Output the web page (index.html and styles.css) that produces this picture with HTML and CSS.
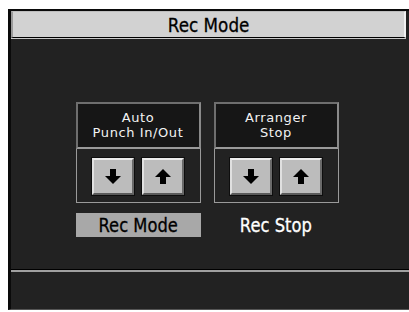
FILE: index.html
```html
<!DOCTYPE html>
<html>
<head>
<meta charset="utf-8">
<link rel="stylesheet" href="styles.css">
</head>
<body>
<div class="screen">
  <div class="title"><span class="t">Rec Mode</span></div>
  <div class="main">
    <div class="col">
      <div class="panel">
        <div class="caption"><span class="c">Auto</span><span class="c">Punch In/Out</span></div>
        <div class="btns">
          <div class="btn"><svg class="arr" viewBox="0 0 16 15"><path d="M5 0h6v7h5l-8 8-8-8h5z" fill="#000"/></svg></div>
          <div class="btn"><svg class="arr" viewBox="0 0 16 15"><path d="M5 15h6v-7h5l-8-8-8 8h5z" fill="#000"/></svg></div>
        </div>
      </div>
      <div class="label sel"><span class="l">Rec Mode</span></div>
    </div>
    <div class="col">
      <div class="panel">
        <div class="caption"><span class="c">Arranger</span><span class="c">Stop</span></div>
        <div class="btns">
          <div class="btn"><svg class="arr" viewBox="0 0 16 15"><path d="M5 0h6v7h5l-8 8-8-8h5z" fill="#000"/></svg></div>
          <div class="btn"><svg class="arr" viewBox="0 0 16 15"><path d="M5 15h6v-7h5l-8-8-8 8h5z" fill="#000"/></svg></div>
        </div>
      </div>
      <div class="label"><span class="l">Rec Stop</span></div>
    </div>
  </div>
  <div class="foot"></div>
</div>
</body>
</html>
```
FILE: styles.css
```css
html, body { margin: 0; padding: 0; background: #fff; }
body { font-family: "DejaVu Sans", "Noto Sans", sans-serif; }
.screen {
  margin: 9px 0 0 8px;
  width: 401px;
  height: 301px;
  box-sizing: border-box;
  background: #222;
  border-left: 3px solid #0a0a0a;
  border-top: 2px solid #0a0a0a;
  border-bottom: 1px solid #555;
  display: flex;
  flex-direction: column;
}
.title {
  height: 27px;
  box-sizing: border-box;
  background: #d2d2d2;
  border-left: 2px solid #9a9a9a;
  border-top: 1px solid #bdbdbd;
  border-right: 2px solid #f0f0f0;
  margin-right: 3px;
  text-align: center;
  font-size: 20px;
  line-height: 26px;
  color: #000;
  border-bottom: 1px solid #000;
  box-shadow: 0 1px 0 #c8c8c8;
}
.t { display: inline-block; transform: scaleX(0.84); -webkit-text-stroke: 0.3px #000; }
.main {
  flex: 1;
  display: flex;
  justify-content: center;
  gap: 13px;
  padding-top: 64px;
  padding-right: 6px;
  border-bottom: 1px solid #000;
}
.col { display: flex; flex-direction: column; width: 125px; }
.panel { display: flex; flex-direction: column; }
.caption {
  height: 47px;
  box-sizing: border-box;
  background: #161616;
  border: 2px solid #6e6e6e;
  border-right-color: #8a8a8a;
  border-bottom-color: #9a9a9a;
  color: #f2f2f2;
  font-size: 13px;
  line-height: 15px;
  text-align: center;
  padding-top: 6px;
  display: flex;
  flex-direction: column;
  align-items: center;
}
.c { display: block; letter-spacing: 0.6px; }
.btns {
  height: 54px;
  box-sizing: border-box;
  border: 1px solid #9a9a9a;
  border-top: none;
  display: flex;
  justify-content: center;
  align-items: center;
  gap: 8px;
  padding-top: 1px;
}
.btn {
  width: 42px;
  height: 37px;
  box-sizing: border-box;
  background: #bcbcbc;
  border-top: 2px solid #ececec;
  border-left: 2px solid #e0e0e0;
  border-right: 2px solid #6a6a6a;
  border-bottom: 2px solid #5a5a5a;
  outline: 1px solid #0e0e0e;
  display: flex;
  justify-content: center;
  align-items: center;
}
.arr { width: 16px; height: 15px; display: block; }
.label {
  margin-top: 10px;
  height: 24px;
  text-align: center;
  font-size: 19px;
  line-height: 24px;
  color: #fff;
}
.l { display: inline-block; transform: scaleX(0.86); -webkit-text-stroke: 0.3px currentColor; }
.label.sel { background: #a8a8a8; color: #000; }
.foot {
  height: 37px;
  border-top: 2px solid #a0a0a0;
}
```
